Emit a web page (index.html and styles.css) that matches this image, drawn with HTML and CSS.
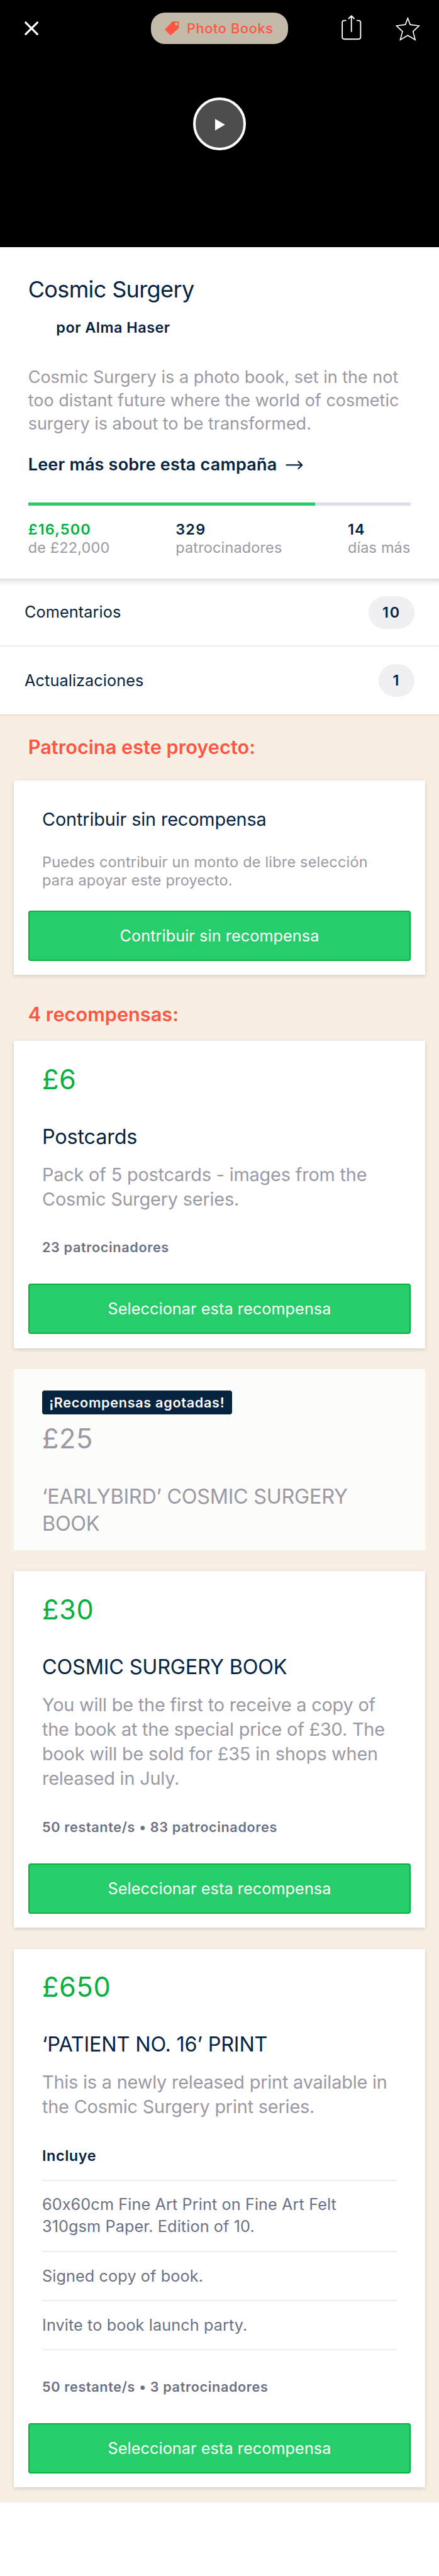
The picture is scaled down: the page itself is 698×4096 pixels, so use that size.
FILE: index.html
```html
<!DOCTYPE html>
<html lang="es">
<head>
<meta charset="utf-8">
<title>Cosmic Surgery</title>
<link rel="stylesheet" href="styles.css">
</head>
<body>
<header class="video">
  <div class="topbar">
    <svg class="icon-close" viewBox="0 0 26 26"><path d="M3 3L23 23M23 3L3 23" fill="none" stroke="#fff" stroke-width="3.4" stroke-linecap="round"/></svg>
    <a class="category">
      <svg class="icon-tag" viewBox="0 0 24 24"><path fill="#ff5541" fill-rule="evenodd" d="M13.5 0H23Q24 0 24 1V11.5L10.8 23.4Q10 24 9.3 23.3L.7 14.8Q0 14 .7 13.2L12.6 .6Q13 0 13.5 0ZM19.7 2a2.4 2.4 0 1 0 0 4.8a2.4 2.4 0 1 0 0-4.8Z"/></svg>
      <span class="category-name">Photo Books</span>
    </a>
    <svg class="icon-share" viewBox="0 0 36 46"><path fill="none" stroke="#fff" stroke-width="2" stroke-linecap="round" stroke-linejoin="round" d="M8.5 10.3H6Q2.3 10.3 2.3 14V38.5Q2.3 42.2 6 42.2H30Q33.7 42.2 33.7 38.5V14Q33.7 10.3 30 10.3H27.5M18 2.5V29M13.4 7L18 2.3L22.6 7"/></svg>
    <svg class="icon-star" viewBox="0 0 48 48"><path fill="none" stroke="#fff" stroke-width="1.8" d="M24 7.6L28.1 18.4L43.2 20.4L33 30.2L36.7 44.2L24 36.7L11.3 44.2L15 30.2L4.8 20.4L19.9 18.4Z"/></svg>
  </div>
  <div class="play"><svg class="icon-play" viewBox="0 0 17 20"><path fill="#fff" d="M0 0L17 10L0 20Z"/></svg></div>
</header>

<section class="summary">
  <h1 class="title">Cosmic Surgery</h1>
  <p class="author">por Alma Haser</p>
  <p class="blurb">Cosmic Surgery is a photo book, set in the not<br>too distant future where the world of cosmetic<br>surgery is about to be transformed.</p>
  <a class="more">Leer más sobre esta campaña <svg class="icon-arrow" viewBox="0 0 30 16"><path fill="none" stroke="#06233f" stroke-width="2.4" stroke-linecap="round" stroke-linejoin="round" d="M1.5 8H28M22 2L28.3 8L22 14"/></svg></a>
  <div class="progress"><div class="progress-fill" style="width:75%"></div></div>
  <div class="stats">
    <div class="stat"><b class="stat-value raised">£16,500</b><span>de £22,000</span></div>
    <div class="stat"><b class="stat-value">329</b><span>patrocinadores</span></div>
    <div class="stat"><b class="stat-value">14</b><span>días más</span></div>
  </div>
</section>

<nav class="links">
  <a class="link">Comentarios<span class="count">10</span></a>
  <a class="link">Actualizaciones<span class="count">1</span></a>
</nav>

<main class="rewards">
  <h2 class="heading">Patrocina este proyecto:</h2>
  <article class="card pledge">
    <h3 class="pledge-title">Contribuir sin recompensa</h3>
    <p class="pledge-text">Puedes contribuir un monto de libre selección<br>para apoyar este proyecto.</p>
    <button class="button">Contribuir sin recompensa</button>
  </article>

  <h2 class="heading heading-list">4 recompensas:</h2>

  <article class="card">
    <div class="amount">£6</div>
    <h3 class="name">Postcards</h3>
    <p class="text">Pack of 5 postcards - images from the<br>Cosmic Surgery series.</p>
    <p class="meta">23 patrocinadores</p>
    <button class="button">Seleccionar esta recompensa</button>
  </article>

  <article class="card sold-out">
    <span class="badge">¡Recompensas agotadas!</span>
    <div class="amount">£25</div>
    <h3 class="name">‘EARLYBIRD’ COSMIC SURGERY<br>BOOK</h3>
  </article>

  <article class="card">
    <div class="amount">£30</div>
    <h3 class="name">COSMIC SURGERY BOOK</h3>
    <p class="text">You will be the first to receive a copy of<br>the book at the special price of £30. The<br>book will be sold for £35 in shops when<br>released in July.</p>
    <p class="meta">50 restante/s • 83 patrocinadores</p>
    <button class="button">Seleccionar esta recompensa</button>
  </article>

  <article class="card">
    <div class="amount">£650</div>
    <h3 class="name">‘PATIENT NO. 16’ PRINT</h3>
    <p class="text">This is a newly released print available in<br>the Cosmic Surgery print series.</p>
    <h4 class="includes">Incluye</h4>
    <ul class="items">
      <li class="item">60x60cm Fine Art Print on Fine Art Felt<br>310gsm Paper. Edition of 10.</li>
      <li class="item">Signed copy of book.</li>
      <li class="item">Invite to book launch party.</li>
    </ul>
    <p class="meta">50 restante/s • 3 patrocinadores</p>
    <button class="button">Seleccionar esta recompensa</button>
  </article>
</main>
</body>
</html>
```
FILE: styles.css
```css
*{box-sizing:border-box;margin:0;padding:0}
html{font-size:9.309px}
body{font-family:Inter,"Liberation Sans",sans-serif;font-size:2.52rem;color:#06233f;background:#fff;height:4096px;overflow:hidden;white-space:nowrap}
svg{display:block;flex:none}
a{display:flex;align-items:center}

/* Video header */
.video{height:42.2rem;background:#000}
.topbar{display:flex;align-items:center;height:9.6rem;padding-left:4.1rem}
.icon-close{width:2.6rem;height:2.6rem}
.category{width:23.4rem;height:5.4rem;margin-left:19.1rem;padding-left:2.4rem;border-radius:2.4rem;background:#c3baaa;color:#ff5541}
.icon-tag{width:2.4rem;height:2.4rem}
.category-name{margin-left:1.3rem;padding-top:.2rem;font-size:2.32rem;font-weight:500;letter-spacing:.079rem;line-height:3.2rem}
.icon-share{width:3.6rem;height:4.6rem;margin-left:9rem}
.icon-star{width:4.8rem;height:4.8rem;margin-left:5.4rem}
.play{display:flex;align-items:center;justify-content:center;width:9.1rem;height:9.1rem;margin:7rem auto 0;border:4px solid #fff;border-radius:50%;background:#4d4d4d}
.icon-play{width:1.7rem;height:2rem;margin:.3rem 0 0 .2rem}

/* Project summary */
.summary{height:56.6rem;padding:4.8rem 4.8rem 0}
.title{font-size:3.87rem;font-weight:400;line-height:4.8rem;letter-spacing:-.068rem}
.author{margin-top:2.6rem;padding-left:4.8rem;font-weight:600;line-height:3.2rem;letter-spacing:.05rem}
.blurb{margin-top:4.8rem;font-size:2.9rem;line-height:4rem;color:#9a99a4}
.more{margin-top:3rem;font-size:2.9rem;font-weight:600;line-height:4rem;letter-spacing:.022rem}
.icon-arrow{width:3rem;height:1.6rem;margin-left:1.5rem}
.progress{height:.6rem;margin-top:4.4rem;background:#dcdee9}
.progress-fill{height:100%;background:#27cc6a}
.stats{display:grid;grid-template-columns:25.2rem 29.4rem auto;margin-top:2.4rem;line-height:3.2rem;letter-spacing:.018rem;color:#9a99a4}
.stat{display:flex;flex-direction:column}
.stat-value{font-weight:600;letter-spacing:.13rem;color:#06233f}
.raised{color:#05b13e}

/* Section links */
.links{box-shadow:inset 0 1.2rem 1.1rem -1rem rgba(0,0,0,.22)}
.link{justify-content:space-between;height:11.6rem;padding:.1rem 4.2rem 0;font-size:2.71rem;line-height:4rem;letter-spacing:.01rem}
.link:first-child{padding-top:.3rem;border-bottom:2px solid #ededed}
.count{min-width:6.15rem;height:5.6rem;padding:0 2.35rem;border-radius:2.8rem;background:#efeff4;font-size:2.52rem;font-weight:600;line-height:5.6rem;letter-spacing:.2rem;text-align:center}

/* Rewards */
.rewards{height:305.4rem;padding:3.02rem 2.4rem 0;border-top:2px solid #f7d9cb;background:#f7efe3}
.heading{padding-left:2.4rem;font-size:3.29rem;font-weight:600;line-height:4.8rem;letter-spacing:.006rem;color:#ff5541}
.heading-list{margin-top:4.42rem}
.card{margin-bottom:3.6rem;padding:3.7rem 4.8rem 2.4rem;background:#fff;box-shadow:0 .2rem .7rem rgba(0,0,0,.15)}
.heading-list + .card{margin-top:2.08rem}
.pledge{margin:3.28rem 0 0;padding-top:4.64rem}
.pledge-title{font-size:3.1rem;font-weight:400;line-height:4rem;letter-spacing:-.016rem}
.pledge-text{margin-top:3.86rem;line-height:3.1rem;letter-spacing:.023rem;color:#9a99a4}
.pledge .button{margin-top:3.5rem}
.amount{font-size:4.65rem;line-height:5.6rem;letter-spacing:.07rem;color:#05b13e}
.name{margin-top:4.83rem;font-size:3.48rem;font-weight:400;line-height:4.56rem;letter-spacing:-.019rem}
.text{margin-top:1.98rem;font-size:3.1rem;line-height:4.2rem;letter-spacing:-.02rem;color:#9a99a4}
.meta{margin-top:4.68rem;font-size:2.32rem;font-weight:600;line-height:3.2rem;letter-spacing:.071rem;color:#6b7184}
.button{display:block;width:calc(100% + 4.8rem);height:8.6rem;margin:4.54rem -2.4rem 0;border:2px solid #05b13e;border-radius:4px;background:#27cd6a;color:#fff;font-family:inherit;font-size:2.71rem;letter-spacing:.008rem}
.includes{margin-top:4.74rem;padding-bottom:2.42rem;border-bottom:2px solid #ededed;font-size:2.52rem;font-weight:600;line-height:3.2rem;letter-spacing:.06rem}
.items{list-style:none}
.item{padding:2.2rem 0 2.18rem;border-bottom:2px solid #ededed;font-size:2.71rem;line-height:3.8rem;letter-spacing:.011rem;color:#6b7184}
.sold-out{padding:3.6rem 4.8rem 2.2rem;background:#fcfcfa;box-shadow:none}
.sold-out .amount{margin-top:1.3rem}
.sold-out .name{margin-top:4.98rem;letter-spacing:-.031rem}
.sold-out .amount,.sold-out .name{color:#9a99a4}
.badge{display:block;width:32.4rem;height:4.1rem;padding-left:1.2rem;border-radius:4px;background:#06233f;color:#fff;font-size:2.32rem;font-weight:600;line-height:4.1rem;letter-spacing:.077rem}
```
